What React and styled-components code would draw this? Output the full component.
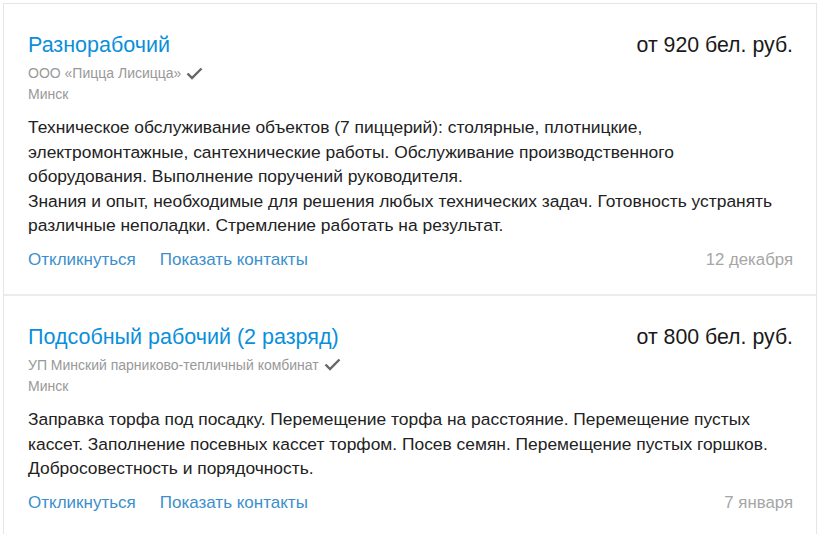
import React from "react";
import styled, { createGlobalStyle } from "styled-components";

const Global = createGlobalStyle`
  html, body { margin: 0; padding: 0; background: #fff; }
  body { font-family: "Liberation Sans", Arial, sans-serif; }
`;

const List = styled.div`
  margin: 3px 0 0 3px;
  width: 814px;
  box-sizing: border-box;
  border: 1px solid #e6e6e6;
  border-bottom: none;
  background: #fff;
`;

const Card = styled.article`
  padding: 29px 23px 24px 24px;
  & + & {
    border-top: 2px solid #ececec;
    padding-top: 29px;
  }
`;

const Head = styled.div`
  display: flex;
  justify-content: space-between;
  align-items: baseline;
`;

const Title = styled.a`
  font-size: 21.5px;
  line-height: 24px;
  color: #0a8fdb;
  text-decoration: none;
`;

const Price = styled.div`
  font-size: 21.3px;
  line-height: 24px;
  color: #1a1a1a;
`;

const Company = styled.div`
  margin-top: 6px;
  display: flex;
  align-items: center;
  gap: 5px;
  font-size: 14px;
  line-height: 20px;
  color: #999;
`;

const Location = styled.div`
  margin-top: 1px;
  font-size: 14px;
  line-height: 20px;
  color: #999;
`;

const Text = styled.p`
  margin: 11px 0 0;
  font-size: 17.4px;
  line-height: 24.6px;
  color: #222;
`;

const Footer = styled.div`
  margin-top: 12px;
  display: flex;
  align-items: center;
  gap: 24px;
  font-size: 17px;
  line-height: 20px;
`;

const Action = styled.a`
  color: #3c8fcc;
  text-decoration: none;
`;

const DateLabel = styled.span`
  margin-left: auto;
  font-size: 16.8px;
  color: #a6a6a6;
`;

const Check = () => (
  <svg width="17" height="13" viewBox="0 0 17 13" aria-hidden="true">
    <polyline points="1.5,6.5 6,11 15.5,1.5" fill="none" stroke="#666" strokeWidth="2.4" />
  </svg>
);

const jobs = [
  {
    title: "Разнорабочий",
    price: "от 920 бел. руб.",
    company: "ООО «Пицца Лисицца»",
    city: "Минск",
    text: [
      "Техническое обслуживание объектов (7 пиццерий): столярные, плотницкие, электромонтажные, сантехнические работы. Обслуживание производственного оборудования. Выполнение поручений руководителя.",
      "Знания и опыт, необходимые для решения любых технических задач. Готовность устранять различные неполадки. Стремление работать на результат.",
    ],
    date: "12 декабря",
  },
  {
    title: "Подсобный рабочий (2 разряд)",
    price: "от 800 бел. руб.",
    company: "УП Минский парниково-тепличный комбинат",
    city: "Минск",
    text: [
      "Заправка торфа под посадку. Перемещение торфа на расстояние. Перемещение пустых кассет. Заполнение посевных кассет торфом. Посев семян. Перемещение пустых горшков. Добросовестность и порядочность.",
    ],
    date: "7 января",
  },
];

export default function App() {
  return (
    <>
      <Global />
      <List>
        {jobs.map((j) => (
          <Card key={j.title}>
            <Head>
              <Title href="#">{j.title}</Title>
              <Price>{j.price}</Price>
            </Head>
            <Company>
              {j.company}
              <Check />
            </Company>
            <Location>{j.city}</Location>
            <Text>
              {j.text.map((t, i) => (
                <React.Fragment key={i}>
                  {i > 0 && <br />}
                  {t}
                </React.Fragment>
              ))}
            </Text>
            <Footer>
              <Action href="#">Откликнуться</Action>
              <Action href="#">Показать контакты</Action>
              <DateLabel>{j.date}</DateLabel>
            </Footer>
          </Card>
        ))}
      </List>
    </>
  );
}
